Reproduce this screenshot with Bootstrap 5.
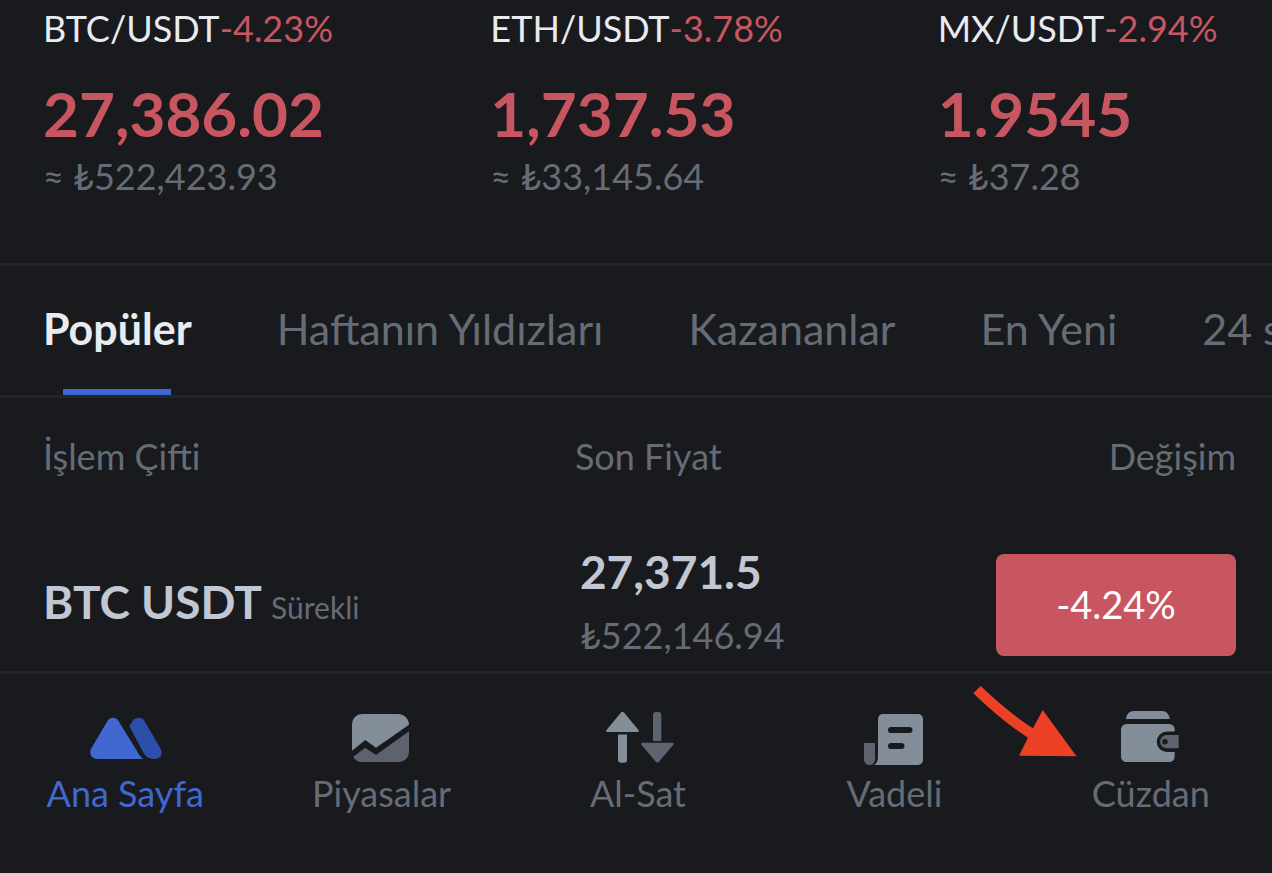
<!DOCTYPE html>
<html lang="tr" data-bs-theme="dark">
<head>
<meta charset="utf-8">
<meta name="viewport" content="width=device-width, initial-scale=1">
<title>Ana Sayfa</title>
<link href="https://cdn.jsdelivr.net/npm/bootstrap@5.3.0/dist/css/bootstrap.min.css" rel="stylesheet">
<style>
  :root { --page: #191a1e; --line: #242529; --muted: #656c75; --bright: #e8ebef; --value: #c1c7d3; --down: #c85661; --brand: #4068d0; }
  body { background: var(--page); color: var(--muted); font-family: Lato, "Liberation Sans", sans-serif; font-size: 36px; line-height: 44px; }
  a { color: inherit; text-decoration: none; }
  .tickers { padding: 6px 0 65px 43px; border-bottom: 3px solid var(--line); }
  .ticker { flex: 0 0 36.4%; }
  .pair { color: var(--bright); }
  .down { color: var(--down); }
  .last-price { font-size: 62px; line-height: 64px; font-weight: 700; margin: 31px 0 9px; }
  .tabs { padding: 0 0 0 43px; gap: 85px; font-size: 43px; line-height: 52px; border-bottom: 3px solid var(--line); }
  .tabs .nav-link { position: relative; padding: 37px 0 40px; color: var(--muted); }
  .tabs .nav-link.active { color: var(--bright); font-weight: 700; }
  .tabs .nav-link.active::after { content: ""; position: absolute; bottom: 0; left: 50%; width: 108px; height: 6px; margin-left: -54px; background: var(--brand); }
  .market { table-layout: fixed; }
  .market th, .market td { padding: 0; font-weight: 400; }
  .market th { padding-top: 36px; padding-bottom: 69px; }
  .market th:first-child, .market td:first-child { width: 45.2%; padding-left: 43px; }
  .market th:last-child, .market td:last-child { padding-right: 36px; }
  .market td { padding-bottom: 8px; }
  .market td:first-child { padding-bottom: 12px; }
  .market td:nth-child(2) { padding-left: 5px; }
  .quote { font-size: 46px; line-height: 50px; font-weight: 700; color: var(--value); }
  .kind { font-size: 30px; }
  .try-price { line-height: 56px; margin-top: 10px; }
  .change { width: 240px; height: 102px; padding-bottom: 4px; font-size: 38px; color: #fff; background: var(--down); border-radius: 8px; border: 0; vertical-align: middle; }
  .dock { border-top: 3px solid var(--line); }
  .dock ul { margin: 0 -7px 0 -3px; padding-top: 36px; }
  .dock a { position: relative; }
  .dock a.active { color: var(--brand); }
  .dock-icon { width: 80px; height: 56px; margin-bottom: 5px; }
  .pointer { position: absolute; top: -25px; left: 50%; margin-left: -178px; width: 104px; height: 72px; }
</style>
</head>
<body class="overflow-x-hidden">
<section class="tickers d-flex overflow-hidden text-nowrap">
  <a href="#" class="ticker"><div class="d-flex"><span class="pair">BTC/USDT</span> <span class="down">-4.23%</span></div><div class="last-price down">27,386.02</div><div>≈ ₺522,423.93</div></a>
  <a href="#" class="ticker"><div class="d-flex"><span class="pair">ETH/USDT</span> <span class="down">-3.78%</span></div><div class="last-price down">1,737.53</div><div>≈ ₺33,145.64</div></a>
  <a href="#" class="ticker"><div class="d-flex"><span class="pair">MX/USDT</span> <span class="down">-2.94%</span></div><div class="last-price down">1.9545</div><div>≈ ₺37.28</div></a>
</section>

<nav class="tabs nav flex-nowrap overflow-hidden text-nowrap" aria-label="Listeler">
  <a class="nav-link active" href="#">Popüler</a>
  <a class="nav-link" href="#">Haftanın Yıldızları</a>
  <a class="nav-link" href="#">Kazananlar</a>
  <a class="nav-link" href="#">En Yeni</a>
  <a class="nav-link" href="#">24 s</a>
</nav>

<table class="market w-100">
  <thead><tr><th>İşlem Çifti</th><th>Son Fiyat</th><th class="text-end">Değişim</th></tr></thead>
  <tbody><tr>
    <td class="text-nowrap"><span class="quote">BTC USDT</span> <span class="kind">Sürekli</span></td>
    <td><div class="quote">27,371.5</div><div class="try-price">₺522,146.94</div></td>
    <td class="text-end"><button type="button" class="change">-4.24%</button></td>
  </tr></tbody>
</table>

<nav class="dock" aria-label="Ana menü">
  <ul class="list-unstyled d-flex text-center">
    <li class="col"><a href="#" class="active d-flex flex-column align-items-center">
      <svg class="dock-icon" viewBox="0 0 80 56" aria-hidden="true"><path fill="#4068d0" d="M22.5 11C25 6.6 31 6.6 33.5 11L52 41Q55 47 58.5 49H13C6 49 3.500 43 6.500 38Z"/><path fill="#2d4ea9" d="M44.300 16L48 10.500C50.500 6.800 57 6.800 59.500 11L75.500 38.500C78.500 43.500 75.500 49 69.500 49C64 49 61 47 58 42Z"/></svg>
      <span>Ana Sayfa</span></a></li>
    <li class="col"><a href="#" class="d-flex flex-column align-items-center">
      <svg class="dock-icon" viewBox="1 0 80 56" aria-hidden="true"><path fill="#848e9b" d="M21 4H57A11 11 0 0 1 68 14.700L35 37.700 24.300 30 11 40.700V14A10 10 0 0 1 21 4Z"/><path fill="#5c636e" d="M12.300 46.700L24.300 37.700 35 45 68 21.300V42A10 10 0 0 1 58 52H21C17 52 14 50 12.300 46.700Z"/></svg>
      <span>Piyasalar</span></a></li>
    <li class="col"><a href="#" class="d-flex flex-column align-items-center">
      <svg class="dock-icon" viewBox="0 0 80 56" aria-hidden="true"><path fill="#848e9b" d="M23 2.500Q24.500 1 26 2.500L40.500 20Q41.500 22 39.500 22H9.500Q7.500 22 8.500 20ZM20 24.500H29V49.700Q29 52.700 26 52.700H23Q20 52.700 20 49.700Z"/><path fill="#5c636e" d="M55 31V5Q55 2 58 2H60.300Q63.300 2 63.300 5V31ZM44.500 32.700H74.500Q76.500 32.700 75.300 34.700L61 51.700Q59.400 53.500 57.800 51.700L43.500 34.700Q42.500 32.700 44.500 32.700Z"/></svg>
      <span>Al-Sat</span></a></li>
    <li class="col"><a href="#" class="d-flex flex-column align-items-center">
      <svg class="dock-icon" viewBox="1 0 80 56" aria-hidden="true"><path fill="#5c636e" d="M11 33H22V49.500A5.500 5.500 0 0 1 11 49.500Z"/><path fill="#848e9b" d="M30 4H65A5 5 0 0 1 70 9V50A5 5 0 0 1 65 55H21Q25 53 25 48V9A5 5 0 0 1 30 4Z"/><path stroke="#191a1e" stroke-width="6" stroke-linecap="round" d="M38 20H56.500M38 36H48.500"/></svg>
      <span>Vadeli</span></a></li>
    <li class="col"><a href="#" class="d-flex flex-column align-items-center">
      <svg class="pointer" viewBox="973 685 104 72" aria-hidden="true"><path fill="#ec4127" d="M973.300 693.300L980.700 686Q1009 713 1033 728.300L1042.700 710 1076.500 756.200 1019 755.700 1028 737.700Q1003 722 973.300 693.300Z"/></svg>
      <svg class="dock-icon" viewBox="0 0 80 56" aria-hidden="true"><path fill="#848e9b" d="M15 9Q16 1 23 1H51Q57.500 1 58.700 9ZM15.500 14H58.200A5.500 5.500 0 0 1 63.700 19.500V21.500H56A10.200 10.200 0 0 0 56 42H63.700V46.500A5.500 5.500 0 0 1 58.200 52H15.500A5.500 5.500 0 0 1 10 46.500V19.500A5.500 5.500 0 0 1 15.500 14Z"/><path fill="#5c636e" d="M67.700 25V38.300H55.700A6.650 6.650 0 0 1 55.700 25Z"/><circle cx="54" cy="31.700" r="2.700" fill="#191a1e"/></svg>
      <span>Cüzdan</span></a></li>
  </ul>
</nav>
<script src="https://cdn.jsdelivr.net/npm/bootstrap@5.3.0/dist/js/bootstrap.bundle.min.js"></script>
</body>
</html>
